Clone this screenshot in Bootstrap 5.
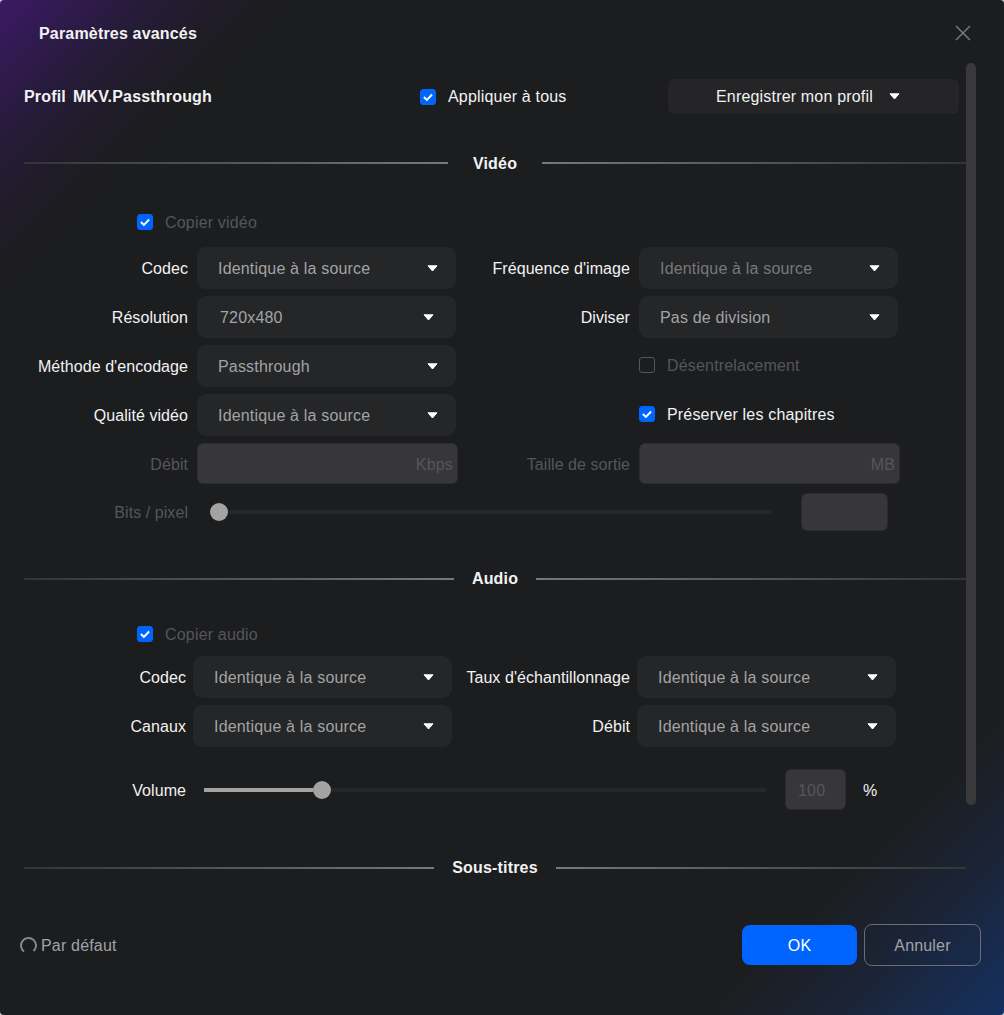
<!DOCTYPE html>
<html lang="fr">
<head>
<meta charset="utf-8">
<title>Paramètres avancés</title>
<link href="https://cdn.jsdelivr.net/npm/bootstrap@5.3.0/dist/css/bootstrap.min.css" rel="stylesheet">
<style>
html,body{height:100%;margin:0;background:#c9d2d4;}
body{font-family:"Liberation Sans",Arial,sans-serif;font-size:16px;color:#f2f2f2;letter-spacing:.18px;}
.btn{letter-spacing:.18px;}
.app-win{position:relative;width:1004px;height:1015px;overflow:hidden;border-radius:4px;
 background:linear-gradient(135deg,#3b1a63 0,#311a50 50px,#261b38 105px,#1f1c27 160px,#1c1d1f 205px,#1c1d1f calc(100% - 215px),#1b2334 calc(100% - 130px),#182a4c calc(100% - 60px),#14305f 100%);}
.win-head{height:66px;padding:0 33px 0 39px;}
.win-title{font-size:16px;font-weight:700;padding-top:2px;}
.win-close{background:none;border:0;padding:0;line-height:0;}
.body-pane{width:966px;padding-left:24px;}
.scroll-bar{position:absolute;top:63px;right:28px;width:10px;height:742px;border-radius:5px;background:#39393c;}
.prof-row{margin-top:13px;height:35px;}
.prof-name{width:396px;font-weight:700;word-spacing:2.4px;}
.prof-apply{width:248px;}
.prof-btn{width:291px;height:35px;padding:0 0 0 48px;gap:16px;background:#252527;color:#f2f2f2;border:0;border-radius:6px;}
.sec-head{height:20px;gap:18px;}
.sec-head.wide-gap{gap:25px;}
.sec-name{font-weight:700;line-height:20px;}
.wide-gap .sec-name{padding-top:2px;}
.rule-l,.rule-r{flex:1 1 0;height:2px;}
.rule-l{background:linear-gradient(90deg,#333436,#77787a);}
.rule-r{background:linear-gradient(90deg,#77787a,#333436);}
.mt-video{margin-top:39px;}
.mt-audio{margin-top:38px;}
.mt-subs{margin-top:48px;}
.copy-row{margin-left:113px;height:16px;}
.copy-v{margin-top:41px;}
.copy-a{margin-top:37px;}
.form-check-input.chk{width:16px;height:16px;margin:0 12px 0 0;border-radius:3px;background-color:transparent;border:1px solid #55565a;opacity:1;flex:none;}
.form-check-input.chk:checked{background-color:#0064ff;border-color:#0064ff;background-size:16px 16px;
 background-image:url("data:image/svg+xml,%3csvg xmlns='http://www.w3.org/2000/svg' viewBox='0 0 16 16'%3e%3cpath fill='none' stroke='%23fff' stroke-width='1.9' d='M3.9 8l3 2.9 5.2-5.4'/%3e%3c/svg%3e");}
.form-check-input.chk:disabled{opacity:1;}
.txt-low{padding-top:2px;}
.txt-low .form-check-input.chk{margin-top:-2px;}
.dim{color:#55565a;}
.grid-v{display:grid;grid-template-columns:164px 259px 165px 259px;grid-auto-rows:42px;column-gap:9px;row-gap:7px;margin-top:17px;}
.grid-a{display:grid;grid-template-columns:162px 259px 171px 259px;grid-auto-rows:42px;column-gap:7px;row-gap:7px;margin-top:14px;}
.flab{text-align:right;align-self:center;white-space:nowrap;padding-top:2px;letter-spacing:.06px;}
.sel{height:42px;width:100%;padding:2px 18px 0 21px;background:#252628;border:0;border-radius:9px;color:#a3a3a3;text-align:left;}
.sel svg{margin-top:-2px;}
.sel.alt-pad{padding:2px 22px 0 23px;}
.sel.muted-sel{color:#77787b;}
.nudge{margin-bottom:2px;}
.inp-box{height:41px;width:calc(100% + 2px);background:#37373a;border:1px solid #2b2c2e;border-radius:6px;color:#55565a;padding:1px 4px 0 0;text-align:right;line-height:39px;}
.bits-row{margin-top:8px;height:38px;}
.bits-lab{width:164px;text-align:right;padding-top:2px;letter-spacing:.06px;}
.slide{display:flex;align-items:center;height:18px;}
.bits-slide{margin-left:22px;width:562px;}
.vol-slide{margin-left:18px;width:562px;}
.sl-fill{height:4px;background:#a3a3a3;}
.sl-thumb{width:18px;height:18px;border-radius:50%;background:#a3a3a3;flex:none;}
.sl-rest{flex:1 1 0;height:4px;background:#262729;}
.bits-inp{width:87px;height:38px;margin-left:29px;background:#37373a;border:1px solid #2b2c2e;border-radius:6px;}
.vol-row{margin-top:22px;height:41px;}
.vol-lab{width:162px;text-align:right;padding-top:2px;letter-spacing:.06px;}
.vol-inp{width:61px;height:41px;margin-left:19px;padding:1px 0 0 12px;background:#37373a;border:1px solid #2b2c2e;border-radius:6px;color:#55565a;line-height:39px;}
.vol-unit{margin-left:17px;padding-top:2px;}
.win-foot{position:absolute;left:20px;right:23px;bottom:49px;height:42px;}
.reset-wrap{gap:4px;color:#a0a3a8;}
.reset-wrap span{padding-top:2px;}
.ok-btn.btn{width:115px;height:40px;padding:2px 0 0;background:#0064ff;border:0;border-radius:8px;color:#fff;font-size:16px;}
.no-btn.btn{width:117px;height:42px;padding:2px 0 0;margin-left:7px;background:transparent;border:1px solid #6c6d72;border-radius:8px;color:#a3a3a3;font-size:16px;}
</style>
</head>
<body>
<div class="app-win">
  <header class="win-head d-flex align-items-center justify-content-between">
    <div class="win-title">Paramètres avancés</div>
    <button class="win-close" type="button" aria-label="Fermer">
      <svg width="16" height="16" viewBox="0 0 16 16"><path d="M1 1l14 14M15 1L1 15" stroke="#77787b" stroke-width="1.5" fill="none"/></svg>
    </button>
  </header>

  <div class="scroll-bar"></div>

  <main class="body-pane">
    <div class="prof-row d-flex align-items-center">
      <div class="prof-name">Profil MKV.Passthrough</div>
      <label class="prof-apply d-flex align-items-center">
        <input class="form-check-input chk" type="checkbox" checked>Appliquer à tous
      </label>
      <button class="btn prof-btn d-flex align-items-center" type="button">Enregistrer mon profil
        <svg width="11" height="7" viewBox="0 0 11 7"><path d="M1 .8h9L5.5 6z" fill="#fff" stroke="#fff" stroke-linejoin="round"/></svg>
      </button>
    </div>

    <div class="sec-head wide-gap mt-video d-flex align-items-center">
      <div class="rule-l"></div><div class="sec-name">Vidéo</div><div class="rule-r"></div>
    </div>

    <label class="copy-row copy-v txt-low d-flex align-items-center dim">
      <input class="form-check-input chk" type="checkbox" checked disabled>Copier vidéo
    </label>

    <div class="grid-v">
      <div class="flab">Codec</div>
      <button class="btn sel d-flex align-items-center justify-content-between" type="button">Identique à la source
        <svg width="11" height="7" viewBox="0 0 11 7"><path d="M1 .8h9L5.5 6z" fill="#fff" stroke="#fff" stroke-linejoin="round"/></svg></button>
      <div class="flab">Fréquence d'image</div>
      <button class="btn sel muted-sel d-flex align-items-center justify-content-between" type="button">Identique à la source
        <svg width="11" height="7" viewBox="0 0 11 7"><path d="M1 .8h9L5.5 6z" fill="#fff" stroke="#fff" stroke-linejoin="round"/></svg></button>

      <div class="flab">Résolution</div>
      <button class="btn sel alt-pad d-flex align-items-center justify-content-between" type="button">720x480
        <svg width="11" height="7" viewBox="0 0 11 7"><path d="M1 .8h9L5.5 6z" fill="#fff" stroke="#fff" stroke-linejoin="round"/></svg></button>
      <div class="flab">Diviser</div>
      <button class="btn sel d-flex align-items-center justify-content-between" type="button">Pas de division
        <svg width="11" height="7" viewBox="0 0 11 7"><path d="M1 .8h9L5.5 6z" fill="#fff" stroke="#fff" stroke-linejoin="round"/></svg></button>

      <div class="flab">Méthode d'encodage</div>
      <button class="btn sel d-flex align-items-center justify-content-between" type="button">Passthrough
        <svg width="11" height="7" viewBox="0 0 11 7"><path d="M1 .8h9L5.5 6z" fill="#fff" stroke="#fff" stroke-linejoin="round"/></svg></button>
      <div></div>
      <label class="d-flex align-items-center dim nudge txt-low">
        <input class="form-check-input chk" type="checkbox" disabled>Désentrelacement
      </label>

      <div class="flab">Qualité vidéo</div>
      <button class="btn sel d-flex align-items-center justify-content-between" type="button">Identique à la source
        <svg width="11" height="7" viewBox="0 0 11 7"><path d="M1 .8h9L5.5 6z" fill="#fff" stroke="#fff" stroke-linejoin="round"/></svg></button>
      <div></div>
      <label class="d-flex align-items-center nudge txt-low">
        <input class="form-check-input chk" type="checkbox" checked>Préserver les chapitres
      </label>

      <div class="flab dim">Débit</div>
      <div class="inp-box">Kbps</div>
      <div class="flab dim">Taille de sortie</div>
      <div class="inp-box">MB</div>
    </div>

    <div class="bits-row d-flex align-items-center">
      <div class="bits-lab dim">Bits / pixel</div>
      <div class="slide bits-slide">
        <div class="sl-thumb"></div><div class="sl-rest"></div>
      </div>
      <div class="bits-inp"></div>
    </div>

    <div class="sec-head mt-audio d-flex align-items-center">
      <div class="rule-l"></div><div class="sec-name">Audio</div><div class="rule-r"></div>
    </div>

    <label class="copy-row copy-a txt-low d-flex align-items-center dim">
      <input class="form-check-input chk" type="checkbox" checked disabled>Copier audio
    </label>

    <div class="grid-a">
      <div class="flab">Codec</div>
      <button class="btn sel d-flex align-items-center justify-content-between" type="button">Identique à la source
        <svg width="11" height="7" viewBox="0 0 11 7"><path d="M1 .8h9L5.5 6z" fill="#fff" stroke="#fff" stroke-linejoin="round"/></svg></button>
      <div class="flab">Taux d'échantillonnage</div>
      <button class="btn sel d-flex align-items-center justify-content-between" type="button">Identique à la source
        <svg width="11" height="7" viewBox="0 0 11 7"><path d="M1 .8h9L5.5 6z" fill="#fff" stroke="#fff" stroke-linejoin="round"/></svg></button>

      <div class="flab">Canaux</div>
      <button class="btn sel d-flex align-items-center justify-content-between" type="button">Identique à la source
        <svg width="11" height="7" viewBox="0 0 11 7"><path d="M1 .8h9L5.5 6z" fill="#fff" stroke="#fff" stroke-linejoin="round"/></svg></button>
      <div class="flab">Débit</div>
      <button class="btn sel d-flex align-items-center justify-content-between" type="button">Identique à la source
        <svg width="11" height="7" viewBox="0 0 11 7"><path d="M1 .8h9L5.5 6z" fill="#fff" stroke="#fff" stroke-linejoin="round"/></svg></button>
    </div>

    <div class="vol-row d-flex align-items-center">
      <div class="vol-lab">Volume</div>
      <div class="slide vol-slide">
        <div class="sl-fill" style="width:109px"></div><div class="sl-thumb"></div><div class="sl-rest"></div>
      </div>
      <div class="vol-inp">100</div>
      <div class="vol-unit">%</div>
    </div>

    <div class="sec-head mt-subs d-flex align-items-center">
      <div class="rule-l"></div><div class="sec-name">Sous-titres</div><div class="rule-r"></div>
    </div>
  </main>

  <footer class="win-foot d-flex align-items-center justify-content-between">
    <div class="reset-wrap d-flex align-items-center">
      <svg width="17" height="17" viewBox="0 0 17 17"><path d="M4 14.5A7.5 7.5 0 1 1 13.5 14.1" fill="none" stroke="#86878b" stroke-width="2"/></svg>
      <span>Par défaut</span>
    </div>
    <div class="d-flex align-items-center">
      <button class="btn ok-btn" type="button">OK</button>
      <button class="btn no-btn" type="button">Annuler</button>
    </div>
  </footer>
</div>
<script src="https://cdn.jsdelivr.net/npm/bootstrap@5.3.0/dist/js/bootstrap.bundle.min.js"></script>
</body>
</html>
